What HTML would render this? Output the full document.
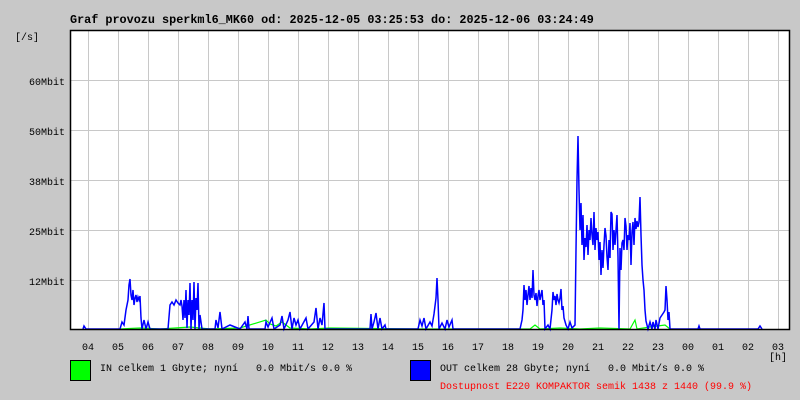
<!DOCTYPE html>
<html><head><meta charset="utf-8"><style>
html,body{margin:0;padding:0;background:#c8c8c8;width:800px;height:400px;overflow:hidden}
svg{display:block}
text{font-family:"Liberation Mono","DejaVu Sans Mono",monospace}
</style></head><body>
<svg width="800" height="400" viewBox="0 0 800 400" xmlns="http://www.w3.org/2000/svg">
<rect x="0" y="0" width="800" height="400" fill="#c8c8c8"/>
<text x="70" y="23" font-size="11.8" font-weight="bold" fill="#000">Graf provozu sperkml6_MK60 od: 2025-12-05 03:25:53 do: 2025-12-06 03:24:49</text>
<text x="15" y="40" font-size="10" fill="#000">[/s]</text>
<rect x="70" y="30" width="720" height="300" fill="#fff"/>
<g stroke="#c8c8c8" stroke-width="1" shape-rendering="crispEdges">
<path d="M88.5 31V330M118.5 31V330M148.5 31V330M178.5 31V330M208.5 31V330M238.5 31V330M268.5 31V330M298.5 31V330M328.5 31V330M358.5 31V330M388.5 31V330M418.5 31V330M448.5 31V330M478.5 31V330M508.5 31V330M538.5 31V330M568.5 31V330M598.5 31V330M628.5 31V330M658.5 31V330M688.5 31V330M718.5 31V330M748.5 31V330M778.5 31V330"/>
<path d="M65 80.5H790M65 130.5H790M65 180.5H790M65 230.5H790M65 280.5H790"/>
</g>
<g font-size="10" fill="#000" text-anchor="end">
<text x="65" y="85">60Mbit</text>
<text x="65" y="135">50Mbit</text>
<text x="65" y="185">38Mbit</text>
<text x="65" y="235">25Mbit</text>
<text x="65" y="285">12Mbit</text>
</g>
<polyline fill="none" stroke="#00ff00" stroke-width="1.2" points="120,329 140,328 160,329 175,328 190,327 210,329 240,328 266,320 270,324 276,326 282,322 290,328 310,329 330,328 420,329 530,329 535,325 540,329 560,328 580,329 600,328 630,329 635,320 637,329 650,327 665,325 670,329"/>
<polyline fill="none" stroke="#0000ff" stroke-width="1.5" points="83,329 84,326 86,329 120,329 122,322 124,325 126,310 128,300 129,285 130,279 131,295 132,300 133,290 134,305 135,298 136,295 137,302 138,297 139,300 140,296 141,318 142,329 144,320 146,329 148,322 150,329 168,329 170,305 172,302 174,305 176,300 178,303 180,305 181,300 182,306 183,320 184,300 185,318 186,290 187,328 188,300 189,315 190,283 191,329 192,300 193,320 194,282 195,329 196,298 197,310 198,283 199,329 200,315 202,329 215,329 216,320 218,328 220,312 222,329 230,325 240,329 245,322 247,329 248,316 249,329 265,329 266,322 268,327 272,318 274,329 280,325 282,316 284,329 288,320 290,312 292,329 294,318 296,325 298,320 300,329 306,318 308,329 314,322 316,308 318,329 320,318 322,325 324,303 325,329 330,329 370,329 371,314 372,329 374,322 376,313 378,329 380,318 382,329 385,325 386,329 418,329 420,320 422,326 424,318 426,329 430,322 432,326 434,314 436,298 437,278 438,300 439,329 442,323 445,329 447,320 449,327 452,320 453,329 520,329 522,320 523,310 524,285 525,300 526,290 527,305 528,295 529,286 530,300 531,288 532,298 533,270 534,295 535,300 536,293 537,306 538,296 539,290 540,300 541,295 542,290 543,305 544,300 545,329 548,325 550,329 552,310 553,292 554,300 555,296 556,305 557,294 558,300 559,303 560,298 561,289 562,310 563,306 564,318 566,325 568,329 570,322 572,328 575,325 576,250 577,180 578,136 579,190 580,230 581,203 582,245 583,215 584,260 585,238 586,247 587,225 588,255 589,230 590,240 591,218 592,235 593,245 594,212 595,250 596,228 597,240 598,232 599,260 600,242 601,275 602,250 603,268 604,245 605,228 606,236 607,257 608,270 609,240 610,258 611,212 612,214 613,250 614,230 615,245 616,230 617,215 618,257 619,329 620,248 621,270 622,243 623,240 624,250 625,218 626,226 627,250 628,235 629,240 630,223 631,265 632,232 633,222 634,245 635,218 636,229 637,221 638,227 639,222 640,197 641,235 642,265 643,280 644,290 645,310 646,321 648,329 650,322 652,329 653,322 655,329 656,320 658,329 660,318 662,315 664,312 665,310 666,286 667,300 668,320 669,312 670,329 698,329 699,326 700,329 758,329 760,326 762,329"/>
<rect x="70.5" y="30.5" width="719" height="299" fill="none" stroke="#000" stroke-width="1.5"/>
<g font-size="10" fill="#000" text-anchor="middle">
<text x="88" y="350">04</text><text x="118" y="350">05</text><text x="148" y="350">06</text><text x="178" y="350">07</text><text x="208" y="350">08</text><text x="238" y="350">09</text><text x="268" y="350">10</text><text x="298" y="350">11</text><text x="328" y="350">12</text><text x="358" y="350">13</text><text x="388" y="350">14</text><text x="418" y="350">15</text><text x="448" y="350">16</text><text x="478" y="350">17</text><text x="508" y="350">18</text><text x="538" y="350">19</text><text x="568" y="350">20</text><text x="598" y="350">21</text><text x="628" y="350">22</text><text x="658" y="350">23</text><text x="688" y="350">00</text><text x="718" y="350">01</text><text x="748" y="350">02</text><text x="778" y="350">03</text>
<text x="778" y="360">[h]</text>
</g>
<rect x="70.5" y="360.5" width="20" height="20" fill="#00ff00" stroke="#000"/>
<text x="100" y="371" font-size="10" fill="#000" xml:space="preserve">IN celkem 1 Gbyte; nyní   0.0 Mbit/s 0.0 %</text>
<rect x="410.5" y="360.5" width="20" height="20" fill="#0000ff" stroke="#000"/>
<text x="440" y="371" font-size="10" fill="#000" xml:space="preserve">OUT celkem 28 Gbyte; nyní   0.0 Mbit/s 0.0 %</text>
<text x="440" y="389" font-size="10" fill="#ff0000">Dostupnost E220 KOMPAKTOR semik 1438 z 1440 (99.9 %)</text>
</svg>
</body></html>
